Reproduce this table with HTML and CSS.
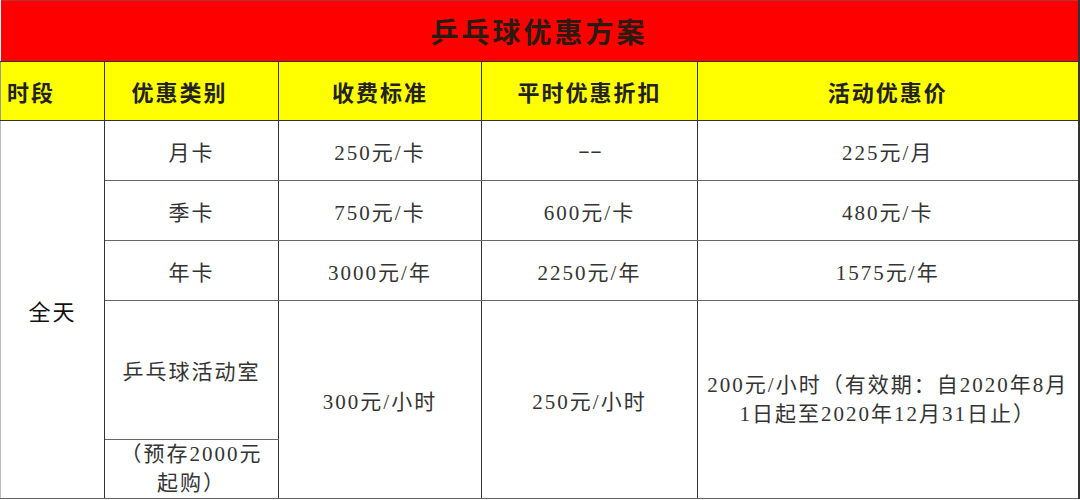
FILE: index.html
```html
<!DOCTYPE html>
<html lang="zh">
<head>
<meta charset="utf-8">
<title>乒乓球优惠方案</title>
<link rel="stylesheet" href="styles.css">
</head>
<body>
<table class="plan">
  <colgroup>
    <col class="c1"><col class="c2"><col class="c3"><col class="c4"><col class="c5">
  </colgroup>
  <tr class="title-row"><td colspan="5" class="title end">乒乓球优惠方案</td></tr>
  <tr class="head-row">
    <td class="head left">时段</td>
    <td class="head shift">优惠类别</td>
    <td class="head">收费标准</td>
    <td class="head">平时优惠折扣</td>
    <td class="head end">活动优惠价</td>
  </tr>
  <tr class="row">
    <td rowspan="5" class="cell period">全天</td>
    <td class="cell">月卡</td>
    <td class="cell">250元/卡</td>
    <td class="cell"><span class="dash">--</span></td>
    <td class="cell end">225元/月</td>
  </tr>
  <tr class="row">
    <td class="cell">季卡</td>
    <td class="cell">750元/卡</td>
    <td class="cell">600元/卡</td>
    <td class="cell end">480元/卡</td>
  </tr>
  <tr class="row">
    <td class="cell">年卡</td>
    <td class="cell">3000元/年</td>
    <td class="cell">2250元/年</td>
    <td class="cell end">1575元/年</td>
  </tr>
  <tr class="row-tall">
    <td class="cell">乒乓球活动室</td>
    <td rowspan="2" class="cell">300元/小时</td>
    <td rowspan="2" class="cell">250元/小时</td>
    <td rowspan="2" class="cell multi end">200元/小时（有效期：自2020年8月<br>1日起至2020年12月31日止）</td>
  </tr>
  <tr class="row-last">
    <td class="cell multi">（预存2000元<br>起购）</td>
  </tr>
</table>
</body>
</html>
```
FILE: styles.css
```css
html, body {
  margin: 0;
  padding: 0;
  background: #ffffff;
}
body {
  width: 1080px;
  height: 500px;
  overflow: hidden;
  font-family: "Liberation Serif", "Noto Sans CJK SC", serif;
}
.plan {
  width: 1078px;
  border-collapse: collapse;
  table-layout: fixed;
}
.c1 { width: 104px; }
.c2 { width: 174px; }
.c3 { width: 203px; }
.c4 { width: 216px; }
.c5 { width: 381px; }

.plan td {
  padding: 0;
  text-align: center;
  vertical-align: middle;
}
.title-row { height: 61px; }
.title {
  background: #ff0000;
  color: #2a1a10;
  font-size: 28px;
  font-weight: 700;
  letter-spacing: 3px;
  border-top: 1px solid #b33;
  border-bottom: 1px solid #333;
  padding-top: 2px;
}
.head-row { height: 59px; }
.head {
  background: #ffff00;
  color: #222;
  font-size: 22px;
  font-weight: 700;
  letter-spacing: 2px;
  border: 1px solid #333;
}
.head.left {
  text-align: left;
  padding-left: 6px;
  border-left: 1px solid #999;
}
.head.shift {
  padding-right: 24px;
}
.row { height: 60px; }
.row-tall { height: 139px; }
.row-last { height: 59px; }
.cell {
  color: #333;
  font-size: 21px;
  letter-spacing: 2px;
  border: 1px solid #666;
  border-left-color: #333;
  border-right-color: #333;
}
.period {
  color: #111;
  font-size: 22px;
  border-left: 1px solid #bbb;
}
.multi {
  line-height: 29px;
}
.dash {
  display: inline-block;
  letter-spacing: 0;
  transform: scaleX(1.7);
}
.plan td.end { border-right: 2px solid #333; }
```
